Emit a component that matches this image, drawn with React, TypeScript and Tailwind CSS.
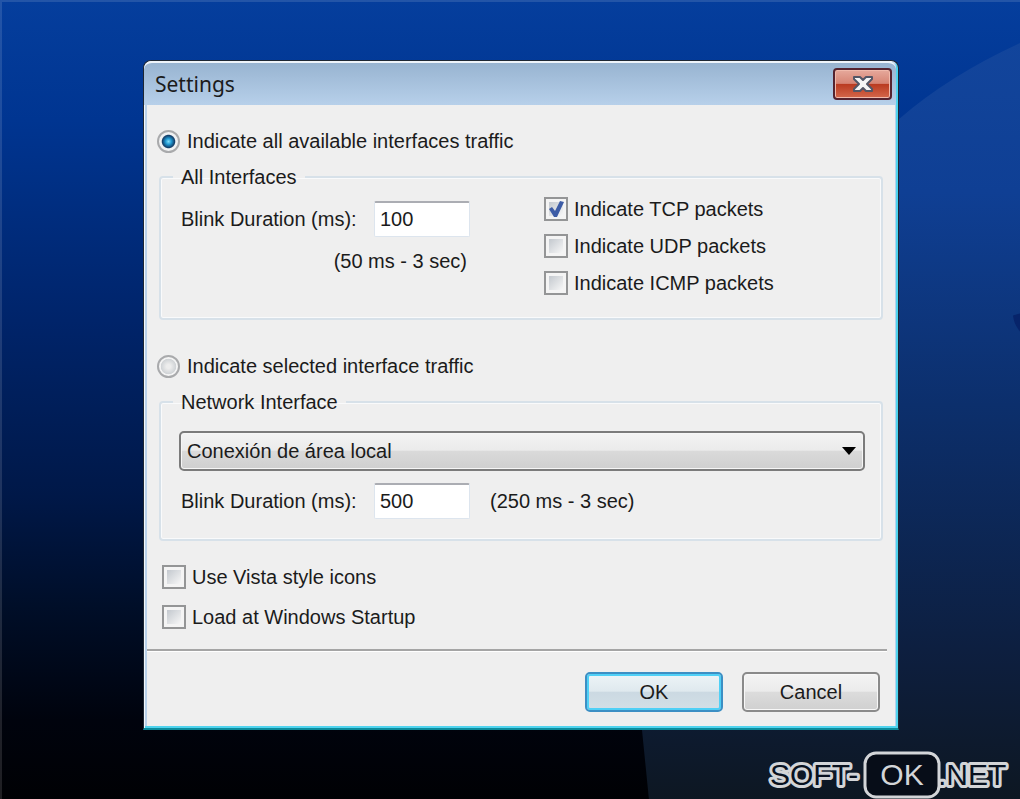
import React, { useState } from 'react'

type CheckProps = {
  label: string
  defaultChecked?: boolean
}

const Check: React.FC<CheckProps> = ({ label, defaultChecked = false }) => (
  <label className="flex items-center gap-[6px] h-6">
    <span className="grid shrink-0">
      <input
        type="checkbox"
        defaultChecked={defaultChecked}
        className="peer col-start-1 row-start-1 appearance-none w-6 h-6 border-2 border-[#949596] bg-[linear-gradient(135deg,#c3c8ce,#f7f7f7)] bg-[length:14px_14px] bg-center bg-no-repeat bg-[#f4f4f4]"
      />
      <svg
        viewBox="0 0 24 24"
        className="col-start-1 row-start-1 w-6 h-6 opacity-0 peer-checked:opacity-100 pointer-events-none"
      >
        <path d="M5 12l3-2 3 4 5-10 4 1-7 15h-3z" fill="#3d5ca6" />
      </svg>
    </span>
    {label}
  </label>
)

type ModeProps = {
  label: string
  checked: boolean
  onSelect: () => void
}

const Mode: React.FC<ModeProps> = ({ label, checked, onSelect }) => (
  <label className="flex items-center gap-[7px] h-6">
    <input
      type="radio"
      name="mode"
      checked={checked}
      onChange={onSelect}
      className="appearance-none w-[23px] h-[23px] rounded-full border-2 border-[#a9aaac] bg-[radial-gradient(circle_at_50%_50%,#ededed_15%,#d0d3d6_55%,#f4f4f4_60%)] checked:bg-[radial-gradient(circle_at_50%_50%,#7fdcf8_0,#2299d2_22%,#123d68_46%,#f1f2f3_54%)]"
    />
    {label}
  </label>
)

const inputClass =
  'w-24 h-9 pl-[5px] bg-white border border-[#dde5ee] border-t-2 border-t-[#abadb3] rounded-xs outline-none'

const groupClass = 'rounded-sm border-2 border-[#d7e1e9] shadow-[inset_0_0_0_1px_#f9fafb]'

const buttonClass = 'w-[138px] h-10 rounded-[5px] border-2'

/** Night-sky wallpaper with the large lighter disc on the right. */
const Wallpaper: React.FC = () => (
  <svg
    className="absolute inset-0 w-full h-full"
    viewBox="0 0 1020 799"
    preserveAspectRatio="none"
    aria-hidden="true"
  >
    <defs>
      <linearGradient id="sky" x1="0" y1="0" x2="0" y2="1">
        <stop offset="0" stopColor="#053e9d" />
        <stop offset="0.15" stopColor="#003591" />
        <stop offset="0.4" stopColor="#00246a" />
        <stop offset="0.62" stopColor="#001848" />
        <stop offset="0.76" stopColor="#000e28" />
        <stop offset="0.9" stopColor="#00030d" />
        <stop offset="1" stopColor="#000104" />
      </linearGradient>
      <linearGradient id="disc" gradientUnits="userSpaceOnUse" x1="0" y1="40" x2="0" y2="799">
        <stop offset="0" stopColor="#12459c" />
        <stop offset="0.2" stopColor="#0f3f94" />
        <stop offset="0.48" stopColor="#0c2f6c" />
        <stop offset="0.8" stopColor="#0d1f40" />
        <stop offset="1" stopColor="#0d1722" />
      </linearGradient>
    </defs>
    <rect width="1020" height="799" fill="url(#sky)" />
    <path d="M1020 43Q950 75 900 118C720 260 615 500 642 729L649 799H1020Z" fill="url(#disc)" />
    <path d="M1020 313L1013 315Q1014 324 1020 331Z" fill="#07246a" />
    <path d="M0 0H1020V2H2V799H0Z" fill="#fff" fillOpacity="0.12" />
  </svg>
)

const Watermark: React.FC = () => (
  <svg
    className="absolute right-2 bottom-0 w-[246px] h-[50px] text-[30px]"
    viewBox="0 0 246 50"
    role="img"
    aria-label="SOFT-OK.NET"
  >
    <g fill="#08111f" stroke="#d3d5d8" strokeWidth="6" strokeLinejoin="round" paintOrder="stroke">
      <text x="4" y="35">SOFT-</text>
      <text x="172" y="35">.NET</text>
    </g>
    <rect x="99" y="3" width="74" height="44" rx="11" fill="#070d18" stroke="#d3d5d8" strokeWidth="3" />
    <text x="136" y="35" textAnchor="middle" fill="#d3d5d8">OK</text>
  </svg>
)

export default function App() {
  const [mode, setMode] = useState('all')

  return (
    <main className="relative min-h-screen bg-[#000104] pt-[60px] pb-[70px] pl-[143px] pr-[121px] font-['Liberation_Sans',Arial,sans-serif] text-[20px] leading-6 text-[#1b1b1b]">
      <Wallpaper />

      <section
        aria-label="Settings"
        className="relative rounded-t-lg border border-[#1e2733] border-b-2 border-b-[#0c8b9b] bg-[#b9d1ea] shadow-[inset_1px_1px_0_#f3f8fc,inset_-2px_-2px_0_#4fd3ee]"
      >
        {/* Title bar */}
        <header className="flex items-start justify-between h-11 pt-[5px] pl-[11px] pr-1 rounded-t-lg bg-linear-to-b from-[#98b4d1] to-[#b7d0ea] border-t-2 border-t-[#eef4fa] mr-[2px]">
          <h1 className="font-['Noto_Sans','Open_Sans',sans-serif] text-[21px] leading-8">Settings</h1>
          <button
            aria-label="Close"
            className="w-[59px] h-8 flex items-center justify-center rounded-[4px] border-2 border-[#54232f] bg-[linear-gradient(#e6a99c,#d68474_48%,#b93a20_50%,#d4674b)] shadow-[inset_0_0_0_1px_#f0b9ab]"
          >
            <svg viewBox="0 0 22 18" className="w-[22px] h-[18px]" aria-hidden="true">
              <path
                d="M2 2h6l3 3 3-3h6v2l-5 5 5 5v2h-6l-3-3-3 3H2v-2l5-5-5-5z"
                fill="#f5f5f5"
                stroke="#535666"
                strokeWidth="2"
                strokeLinejoin="round"
              />
            </svg>
          </button>
        </header>

        {/* Body */}
        <div className="mx-[3px] mb-[2px] bg-[#efefef]">
          <div className="pl-[10px] pr-3 pt-6">
            <Mode
              label="Indicate all available interfaces traffic"
              checked={mode === 'all'}
              onSelect={() => setMode('all')}
            />

            <fieldset className={`${groupClass} mt-3 ml-[2px] h-[155px] pl-5 pr-4`}>
              <legend className="-ml-2 px-2">All Interfaces</legend>
              <div className="flex">
                <div className="w-[363px]">
                  <div className="flex items-center mt-3">
                    <label htmlFor="blink-all" className="w-[193px]">
                      Blink Duration (ms):
                    </label>
                    <input id="blink-all" defaultValue="100" className={inputClass} />
                  </div>
                  <p className="mt-3 w-[286px] text-right">(50 ms - 3 sec)</p>
                </div>
                <div className="flex flex-col gap-[13px] mt-2">
                  <Check label="Indicate TCP packets" defaultChecked />
                  <Check label="Indicate UDP packets" />
                  <Check label="Indicate ICMP packets" />
                </div>
              </div>
            </fieldset>

            <div className="mt-[34px]">
              <Mode
                label="Indicate selected interface traffic"
                checked={mode === 'selected'}
                onSelect={() => setMode('selected')}
              />
            </div>

            <fieldset className={`${groupClass} mt-3 ml-[2px] h-[151px] pl-5 pr-4`}>
              <legend className="-ml-2 px-2">Network Interface</legend>
              <div className="grid items-center mt-[17px] -ml-[2px]">
                <select
                  aria-label="Network Interface"
                  className="col-start-1 row-start-1 appearance-none w-full h-10 pl-[6px] rounded-[5px] border-2 border-[#7b7b7b] bg-[linear-gradient(#f3f3f3,#ebebeb_48%,#dadada_50%,#cfcfcf)] shadow-[inset_0_0_0_1px_#f6f6f6]"
                >
                  <option>Conexión de área local</option>
                </select>
                <svg
                  viewBox="0 0 14 8"
                  className="col-start-1 row-start-1 justify-self-end mr-[9px] w-[14px] h-2 pointer-events-none"
                  aria-hidden="true"
                >
                  <path d="M0 0h14L7 8z" fill="#000" />
                </svg>
              </div>
              <div className="flex items-center mt-3">
                <label htmlFor="blink-one" className="w-[193px]">
                  Blink Duration (ms):
                </label>
                <input id="blink-one" defaultValue="500" className={inputClass} />
                <span className="ml-5">(250 ms - 3 sec)</span>
              </div>
            </fieldset>

            <div className="flex flex-col gap-4 mt-6 ml-[5px]">
              <Check label="Use Vista style icons" />
              <Check label="Load at Windows Startup" />
            </div>
          </div>

          <hr className="mt-5 mr-2 border-t-2 border-b border-t-[#a5a5a5] border-b-white" />

          <footer className="flex justify-end gap-[19px] pt-5 pb-[14px] pr-[15px]">
            <button
              className={`${buttonClass} border-[#3c8fc4] bg-[linear-gradient(#edf4f7,#dfe9ee_48%,#cbd9e2_50%,#d3dfe6)] shadow-[inset_0_0_0_2px_#4fd0f6]`}
            >
              OK
            </button>
            <button
              className={`${buttonClass} border-[#8a8a8a] bg-[linear-gradient(#f4f4f4,#ebebeb_48%,#dcdcdc_50%,#d0d0d0)] shadow-[inset_0_0_0_1px_#f8f8f8]`}
            >
              Cancel
            </button>
          </footer>
        </div>
      </section>

      <Watermark />
    </main>
  )
}
